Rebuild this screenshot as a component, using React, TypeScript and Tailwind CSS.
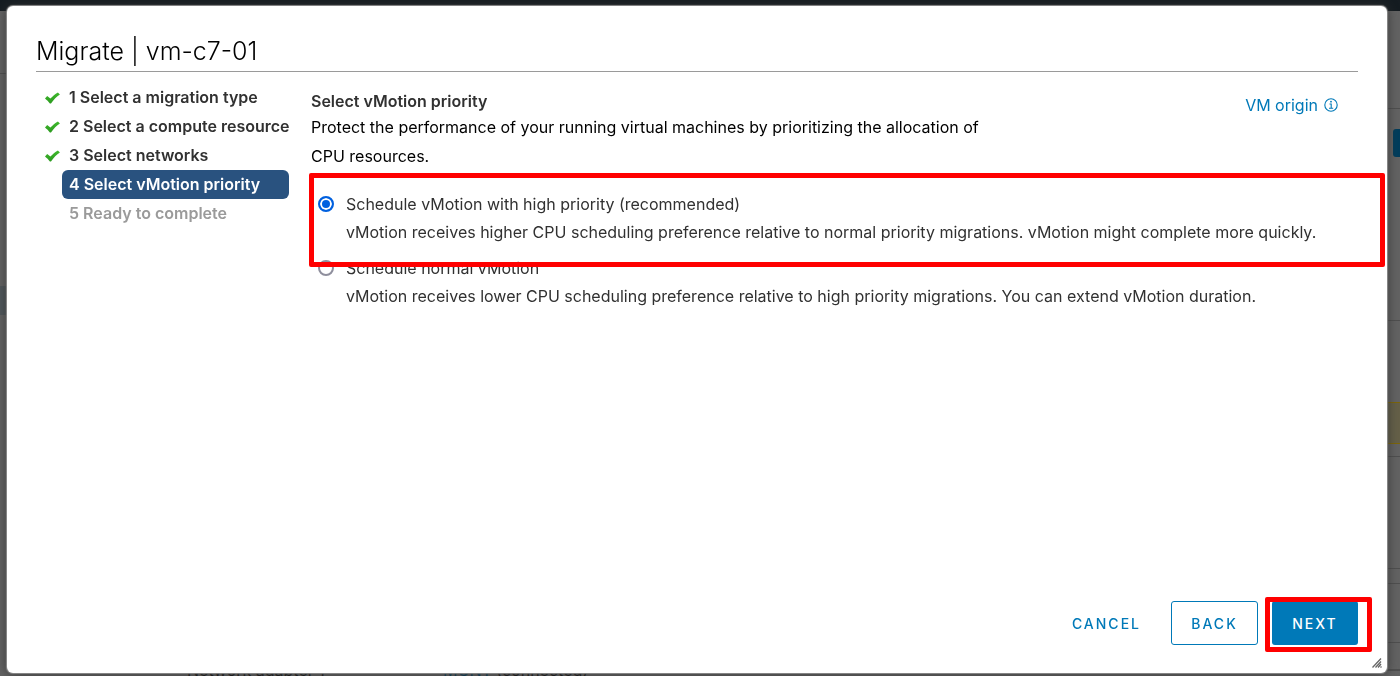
import { useState } from "react";

const steps = [
  { label: "1 Select a migration type", state: "done" },
  { label: "2 Select a compute resource", state: "done" },
  { label: "3 Select networks", state: "done" },
  { label: "4 Select vMotion priority", state: "current" },
  { label: "5 Ready to complete", state: "pending" },
];

const options = [
  {
    id: "high",
    label: "Schedule vMotion with high priority (recommended)",
    help: "vMotion receives higher CPU scheduling preference relative to normal priority migrations. vMotion might complete more quickly.",
  },
  {
    id: "normal",
    label: "Schedule normal vMotion",
    help: "vMotion receives lower CPU scheduling preference relative to high priority migrations. You can extend vMotion duration.",
  },
];

function Check() {
  return (
    <svg viewBox="0 0 16 12" className="h-3 w-4 shrink-0" aria-hidden="true">
      <defs>
        <linearGradient id="tick" x1="0" y1="0" x2="0" y2="1">
          <stop offset="0" stopColor="#3fba2c" />
          <stop offset="1" stopColor="#2c9a20" />
        </linearGradient>
      </defs>
      <path d="M1 6.4 3.2 4.1 6.4 6.6C8.6 4.2 11 2 13.9 0.4L15.9 2.5C12.5 4.7 9.8 7.6 7 11.4H5.9C4.6 9.5 2.8 7.9 1 6.4Z" fill="url(#tick)" />
    </svg>
  );
}

function InfoIcon() {
  return (
    <svg viewBox="0 0 14 14" className="size-3.5" fill="none" stroke="currentColor" aria-hidden="true">
      <circle cx="7" cy="7" r="6.2" strokeWidth="1.1" />
      <path d="M5.5 6H7.2V10M5 10.2H9.2" strokeWidth="1.1" />
      <circle cx="7" cy="3.7" r="0.9" fill="currentColor" stroke="none" />
    </svg>
  );
}

function Backdrop() {
  return (
    <div className="flex h-screen flex-col overflow-hidden bg-[#636363]" aria-hidden="true">
      <div className="h-[11px] shrink-0 bg-[#151c21]" />
      <div className="flex min-h-0 flex-1 justify-between">
        <div className="w-40 shrink-0">
          <div className="h-[63px] border-b border-[#4f4f4f]" />
          <div className="mt-[212px] h-[29px] bg-[#50575b]" />
        </div>
        <div className="flex flex-1 items-end pl-[27px] text-base leading-3 text-[#111]">
          <span className="w-64">Network adapter 1</span>
          <span><span className="text-[#003c5a]">MGNT</span> (connected)</span>
        </div>
        <div className="w-40 shrink-0">
          <div className="h-[98px] border-b border-[#4f4f4f]" />
          <div className="mt-5 ml-[153px] h-7 rounded-l-[3px] bg-[#003d5c]" />
          <div className="h-[164px] border-b border-[#4f4f4f]" />
          <div className="mt-[81px] h-[42px] border-y border-[#7d6608] bg-[#656048]" />
          <div className="mt-3 h-[113px] border-y border-[#4f4f4f]" />
          <div className="mt-[14px] h-[60px] border-y border-[#4f4f4f]" />
          <div className="h-7 border-b-2 border-[#4f4f4f]" />
        </div>
      </div>
    </div>
  );
}

export default function App() {
  const [priority, setPriority] = useState("high");

  return (
    <div className="font-['Inter','Liberation_Sans',sans-serif]">
      <Backdrop />
      <section
        role="dialog"
        aria-labelledby="dialog-title"
        className="fixed top-[6px] right-[13px] bottom-[3px] left-[7px] flex flex-col rounded-md bg-white px-[29px] pt-[29px] pb-7 shadow-[0_0_1px_1px_#8c8c8c,0_1px_12px_#333]"
      >
        <h1 id="dialog-title" className="border-b border-[#9a9a9a] pb-1 text-[25px] leading-8 font-light text-black">
          Migrate | vm-c7-01
        </h1>

        <div className="flex flex-1 pt-[11px]">
          <nav className="w-[253px] shrink-0" aria-label="Migration steps">
            <ol className="text-base leading-[29px] font-semibold text-[#313131]">
              {steps.map((step) => (
                <li key={step.label} className="flex items-center pl-2">
                  <span className="w-[18px] shrink-0">{step.state === "done" && <Check />}</span>
                  <span
                    className={
                      step.state === "current"
                        ? "flex-1 rounded-md bg-[#29527f] pl-[7px] whitespace-nowrap text-white"
                        : step.state === "pending"
                          ? "flex-1 pl-[7px] whitespace-nowrap text-[#9a9a9a]"
                          : "flex-1 pl-[7px] whitespace-nowrap"
                    }
                  >
                    {step.label}
                  </span>
                </li>
              ))}
            </ol>
          </nav>

          <main className="min-w-0 flex-1 pt-[6px] pl-[22px]">
            <div className="flex items-start justify-between pr-5">
              <div className="max-w-[690px]">
                <h2 id="priority-heading" className="text-base leading-6 font-semibold text-[#313131]">Select vMotion priority</h2>
                <p className="text-base leading-[29px] text-black">
                  Protect the performance of your running virtual machines by prioritizing the allocation of CPU resources.
                </p>
              </div>
              <a href="#origin" className="flex items-center gap-[6px] pt-[3px] text-base leading-[26px] text-[#0079b8]">
                VM origin <InfoIcon />
              </a>
            </div>

            <fieldset aria-labelledby="priority-heading" className="relative mt-[19px]">
              {options.map((option) => (
                <div key={option.id} className="mb-2 flex items-start gap-3 pl-[7px] text-base leading-7 text-[#313131]">
                  <input
                    type="radio"
                    id={option.id}
                    name="priority"
                    aria-describedby={option.id + "-help"}
                    checked={priority === option.id}
                    onChange={() => setPriority(option.id)}
                    className="mt-[6px] size-4 shrink-0 appearance-none rounded-full border-2 border-[#8f8f9d] bg-white checked:border-[#0060df] checked:bg-[#0060df] checked:shadow-[inset_0_0_0_2px_white]"
                  />
                  <div className="whitespace-nowrap">
                    <label htmlFor={option.id} className="block">{option.label}</label>
                    <p id={option.id + "-help"}>{option.help}</p>
                  </div>
                </div>
              ))}
              <div className="pointer-events-none absolute -top-[17px] -right-[27px] -left-[2px] h-[94px] rounded-xs border-5 border-[#ff0000]" />
            </fieldset>
          </main>
        </div>

        <footer className="flex items-center justify-end text-[14px] font-medium tracking-[2px] text-[#0079b8]">
          <button type="button" className="h-11 px-[30px]">CANCEL</button>
          <button type="button" className="h-11 w-[87px] rounded-[3px] border border-[#0079b8]">BACK</button>
          <div className="relative ml-[14px]">
            <button type="button" className="block h-11 w-[86px] rounded-[3px] bg-[#0079b8] text-white">NEXT</button>
            <div className="pointer-events-none absolute -top-1 -right-[14px] -bottom-[7px] -left-[7px] rounded-xs border-5 border-[#ff0000]" />
          </div>
        </footer>
        <svg viewBox="0 0 10 10" className="absolute right-[5px] bottom-[5px] size-2.5" stroke="#666" strokeWidth="1.3" aria-hidden="true">
          <path d="M0.5 9.5 9 0.5M3.5 9.5 9 3.5M6 9.5 9 6M8.5 9.5 9.5 8.5" />
        </svg>
      </section>
    </div>
  );
}
